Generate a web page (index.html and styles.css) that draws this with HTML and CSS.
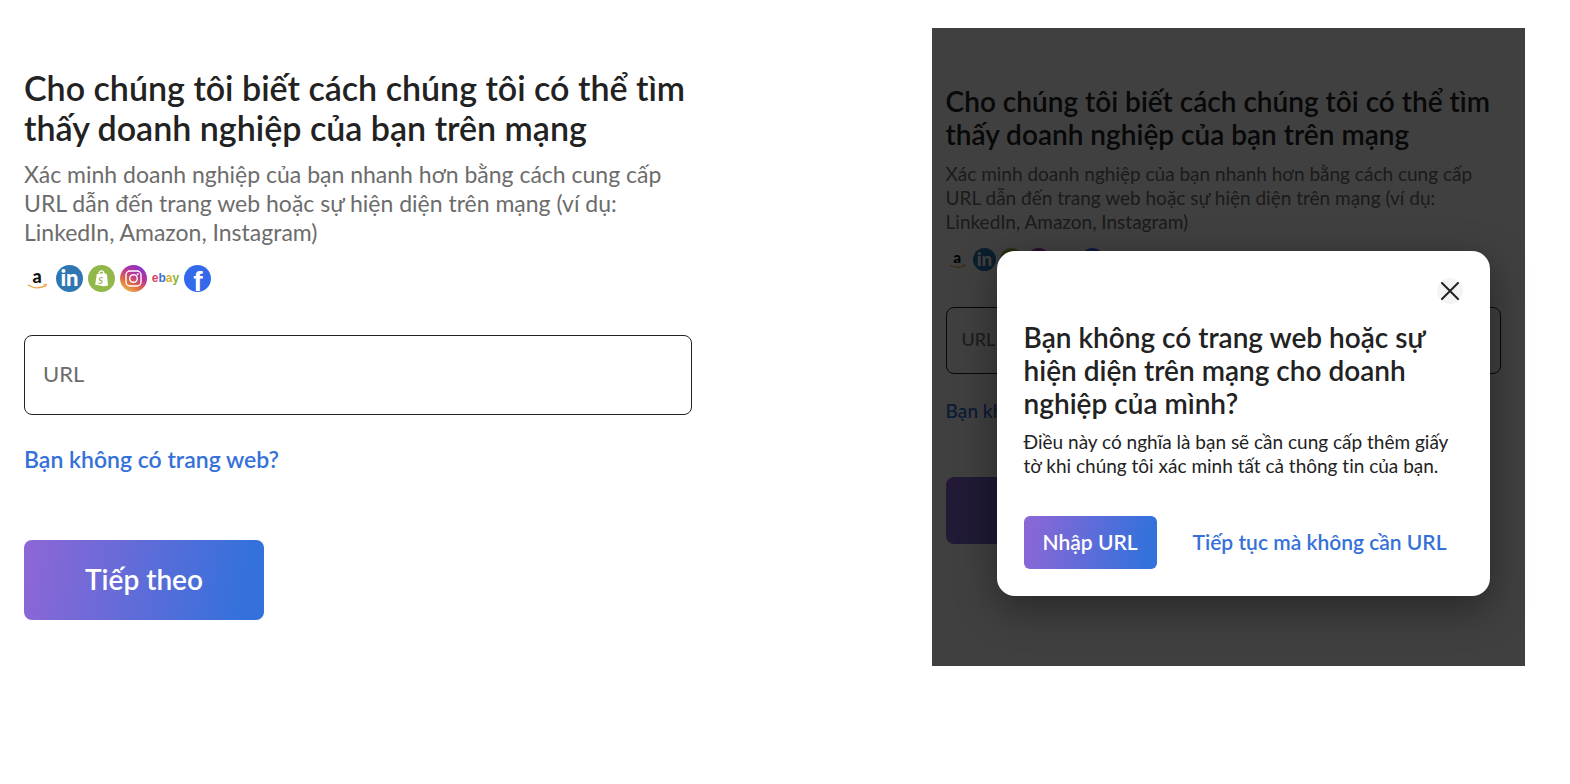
FILE: index.html
```html
<!doctype html>
<html lang="vi">
<head>
<meta charset="utf-8">
<meta name="viewport" content="width=device-width, initial-scale=1">
<title>URL</title>
<link rel="stylesheet" href="styles.css">
</head>
<body>
<main class="page">
	<form class="step">
		<h1>Cho chúng tôi biết cách chúng tôi có thể tìm<br>thấy doanh nghiệp của bạn trên mạng</h1>
		<p class="desc">Xác minh doanh nghiệp của bạn nhanh hơn bằng cách cung cấp<br>URL dẫn đến trang web hoặc sự hiện diện trên mạng (ví dụ:<br>LinkedIn, Amazon, Instagram)</p>
		<div class="logos">
			<svg viewBox="0 0 27 27">
				<g id="amazon">
					<text x="13" y="18" text-anchor="middle" font-size="18" font-weight="900" fill="#111">a</text>
					<path d="M4 20c6 3.600 12 3.600 17.500.6" fill="none" stroke="#f0a24a" stroke-width="1.300"/>
					<path d="M19.500 19.600l3-.4-.8 2.800" fill="none" stroke="#f0a24a"/>
				</g>
			</svg>
			<svg viewBox="0 0 27 27">
				<g id="linkedin">
					<circle cx="13.500" cy="13.500" r="13.500" fill="#2f77b2"/>
					<text x="13.500" y="21" text-anchor="middle" font-size="22" font-weight="900" fill="#fff">in</text>
				</g>
			</svg>
			<svg viewBox="0 0 27 27">
				<g id="shopify">
					<circle cx="13.500" cy="13.500" r="13.500" fill="#93b84a"/>
					<path d="M8.700 9.300l7.800-1.300 2.500 1.500 1 11-4 .8-8.800-1.500z" fill="#fff"/>
					<path d="M10.800 9.300c.3-4 4.200-5 5.200-.8" fill="none" stroke="#fff" stroke-width="1.200"/>
					<text x="12.500" y="18.500" text-anchor="middle" font-size="9" font-weight="700" font-style="italic" fill="#93b84a">S</text>
				</g>
			</svg>
			<svg viewBox="0 0 27 27">
				<defs>
					<linearGradient id="ig" x1="0.8" y1="0" x2="0.2" y2="1">
						<stop offset="0" stop-color="#7a35d8"/>
						<stop offset="0.4" stop-color="#c0368f"/>
						<stop offset="0.7" stop-color="#e0703f"/>
						<stop offset="1" stop-color="#edbe55"/>
					</linearGradient>
				</defs>
				<g id="instagram">
					<circle cx="13.500" cy="13.500" r="13.500" fill="url(#ig)"/>
					<rect x="6" y="6" width="15" height="15" rx="4" fill="none" stroke="#fff" stroke-width="1.400"/>
					<circle cx="13.500" cy="13.500" r="3.800" fill="none" stroke="#fff" stroke-width="1.400"/>
					<circle cx="17.700" cy="9.300" r="1" fill="#fff"/>
				</g>
			</svg>
			<svg viewBox="0 0 27 27">
				<g id="ebay" font-family="Liberation Sans, sans-serif">
					<text x="13.500" y="17" text-anchor="middle" font-size="12" font-weight="700"><tspan fill="#d9435a">e</tspan><tspan fill="#3f6fd0">b</tspan><tspan fill="#e0ae30">a</tspan><tspan fill="#86b33c">y</tspan></text>
				</g>
			</svg>
			<svg viewBox="0 0 27 27">
				<g id="facebook" font-family="Liberation Sans, sans-serif">
					<circle cx="13.500" cy="13.500" r="13.500" fill="#3469ec"/>
					<text x="14" y="26" text-anchor="middle" font-size="28" font-weight="700" fill="#fff">f</text>
				</g>
			</svg>
		</div>
		<input class="url" type="text" placeholder="URL" aria-label="URL">
		<a class="link" href="#">Bạn không có trang web?</a>
		<button class="btn next" type="button">Tiếp theo</button>
	</form>

	<section class="preview">
		<form class="step small" inert>
			<h2>Cho chúng tôi biết cách chúng tôi có thể tìm<br>thấy doanh nghiệp của bạn trên mạng</h2>
			<p class="desc">Xác minh doanh nghiệp của bạn nhanh hơn bằng cách cung cấp<br>URL dẫn đến trang web hoặc sự hiện diện trên mạng (ví dụ:<br>LinkedIn, Amazon, Instagram)</p>
			<div class="logos">
				<svg viewBox="0 0 27 27"><use href="#amazon"/></svg>
				<svg viewBox="0 0 27 27"><use href="#linkedin"/></svg>
				<svg viewBox="0 0 27 27"><use href="#shopify"/></svg>
				<svg viewBox="0 0 27 27"><use href="#instagram"/></svg>
				<svg viewBox="0 0 27 27"></svg>
				<svg viewBox="0 0 27 27"><circle cx="13.500" cy="13.500" r="13.500" fill="#3469ec"/></svg>
			</div>
			<input class="url" type="text" placeholder="URL" aria-label="URL">
			<a class="link" href="#">Bạn không</a>
			<button class="btn next" type="button" aria-label="Tiếp theo"></button>
		</form>
		<div class="overlay">
			<div class="modal" role="dialog" aria-labelledby="modal-title">
				<button class="close" type="button">
					<svg viewBox="0 0 18 18"><path d="M1 1l16 16M17 1L1 17"/></svg>
				</button>
				<h2 id="modal-title">Bạn không có trang web hoặc sự<br>hiện diện trên mạng cho doanh<br>nghiệp của mình?</h2>
				<p>Điều này có nghĩa là bạn sẽ cần cung cấp thêm giấy<br>tờ khi chúng tôi xác minh tất cả thông tin của bạn.</p>
				<div class="actions">
					<button class="btn" type="button">Nhập URL</button>
					<a class="link" href="#">Tiếp tục mà không cần URL</a>
				</div>
			</div>
		</div>
	</section>
</main>
</body>
</html>
```
FILE: styles.css
```css
*{margin: 0;padding: 0;box-sizing: border-box;}
body{background: #fff;color: #222;font-family: Lato,"Noto Sans",sans-serif;font-variant-ligatures: none;}
input,button{font-family: inherit;font-variant-ligatures: inherit;}

.page{display: grid;grid-template-columns: 9fr 8fr;gap: 240px;padding: 28px 45px 28px 24px;}

/* form */
.step{display: flex;flex-direction: column;align-items: flex-start;padding-top: 40px;white-space: nowrap;}
h1,h2{font-weight: 600;}
h1{font-size: 34px;line-height: 40px;}
h2{font-size: 28px;line-height: 33px;}
.desc{margin-top: 12px;font-size: 23px;line-height: 29px;color: #6c6c6c;}
.logos{display: flex;gap: 5px;margin-top: 18px;}
.logos svg{width: 27px;height: 27px;overflow: visible;}
.url{width: 100%;height: 80px;margin-top: 43px;padding: 0 18px 3px;border: 1px solid #222;border-radius: 8px;background: none;font-size: 22px;color: #222;}
.url::placeholder{color: #6c6c6c;opacity: 1;}
.link{font-weight: 600;color: #3571d8;text-decoration: none;}
.step .link{margin-top: 30px;font-size: 23px;line-height: 29px;}
.btn{border: none;border-radius: 8px;background: linear-gradient(100deg,#8f66d6,#3571db 90%);color: #fff;font-weight: 600;cursor: pointer;}
.next{width: 240px;height: 80px;margin-top: 66px;padding-bottom: 3px;font-size: 28px;}

/* dimmed form */
.preview{position: relative;height: 638px;}
.small{padding: 57px 24px 0 14px;}
.small .desc{margin-top: 11px;font-size: 19px;line-height: 24px;}
.small .logos{gap: 4px;margin-top: 14px;}
.small .logos svg{width: 23px;height: 23px;}
.small .url{height: 67px;margin-top: 36px;padding: 0 15px 3px;font-size: 18px;}
.small .link{margin-top: 25px;font-size: 19px;line-height: 24px;}
.small .next{width: 200px;height: 67px;margin-top: 54px;}

.overlay{position: absolute;inset: 0;padding: 223px 35px 0 65px;background: rgba(0,0,0,0.75);}
.modal{display: flex;flex-direction: column;padding: 27px;border-radius: 18px;background: #fff;box-shadow: 0 12px 40px rgba(0,0,0,0.4);white-space: nowrap;}
.close{display: flex;align-items: center;justify-content: center;align-self: flex-end;width: 26px;height: 26px;border: none;border-radius: 50%;background: #f4f4f4;cursor: pointer;}
.close svg{width: 18px;height: 18px;fill: none;stroke: #222;stroke-width: 2;stroke-linecap: round;}
.modal h2{margin-top: 17px;}
.modal p{margin-top: 10px;font-size: 19px;line-height: 24px;}
.actions{display: flex;align-items: center;gap: 36px;margin-top: 38px;}
.actions .btn{width: 133px;height: 53px;padding-bottom: 3px;border-radius: 6px;font-size: 21px;}
.actions .link{padding-bottom: 3px;font-size: 21px;}
```
